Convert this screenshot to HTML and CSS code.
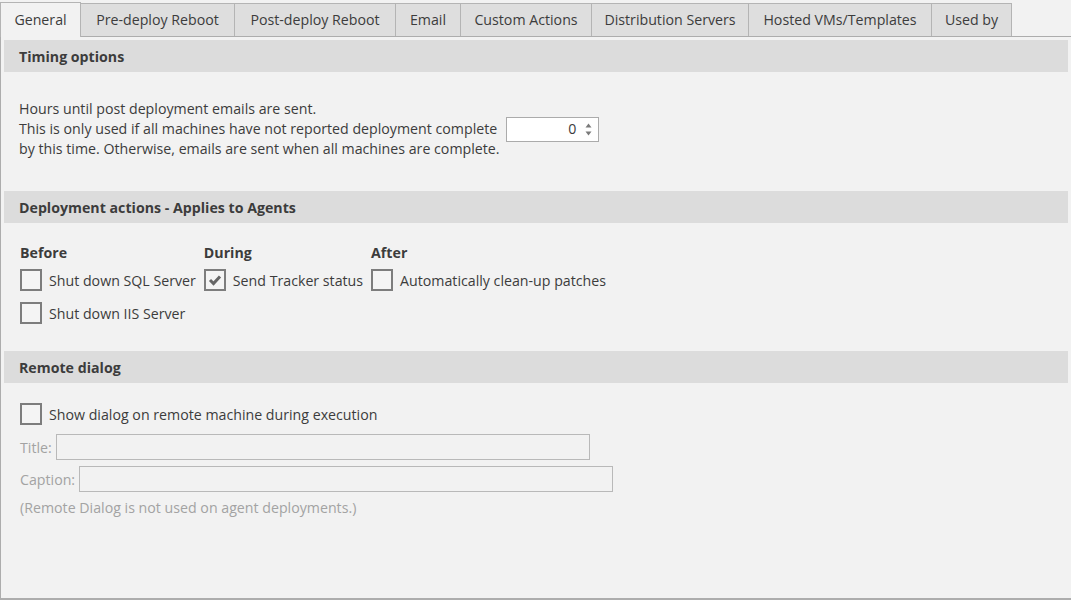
FILE: index.html
```html
<!DOCTYPE html>
<html>
<head>
<meta charset="utf-8">
<link rel="stylesheet" href="styles.css">
</head>
<body>
<div class="tabs">
  <div class="tab active t1">General</div>
  <div class="tab t2">Pre-deploy Reboot</div>
  <div class="tab t3">Post-deploy Reboot</div>
  <div class="tab t4">Email</div>
  <div class="tab t5">Custom Actions</div>
  <div class="tab t6">Distribution Servers</div>
  <div class="tab t7">Hosted VMs/Templates</div>
  <div class="tab t8">Used by</div>
</div>
<div class="panel">
  <div class="section-head">Timing options</div>
  <div class="timing">
    <div class="line">Hours until post deployment emails are sent.</div>
    <div class="line line-spin">This is only used if all machines have not reported deployment complete
      <div class="spinner">
        <span class="spin-val">0</span>
        <span class="spin-arrows">
          <svg width="7" height="5" viewBox="0 0 7 5"><path d="M3.5 0.5 L6.5 4.5 L0.5 4.5 Z" fill="#7a7a7a"/></svg>
          <svg width="7" height="5" viewBox="0 0 7 5"><path d="M0.5 0.5 L6.5 0.5 L3.5 4.5 Z" fill="#7a7a7a"/></svg>
        </span>
      </div>
    </div>
    <div class="line">by this time. Otherwise, emails are sent when all machines are complete.</div>
  </div>

  <div class="section-head head2">Deployment actions - Applies to Agents</div>
  <div class="actions">
    <div class="col">
      <div class="col-title">Before</div>
      <label class="check"><span class="box"></span>Shut down SQL Server</label>
      <label class="check"><span class="box"></span>Shut down IIS Server</label>
    </div>
    <div class="col">
      <div class="col-title">During</div>
      <label class="check"><span class="box checked"><svg width="14" height="12" viewBox="0 0 14 12"><path d="M2 6 L5.5 9.5 L12 2.5" fill="none" stroke="#666666" stroke-width="3"/></svg></span>Send Tracker status</label>
    </div>
    <div class="col">
      <div class="col-title">After</div>
      <label class="check"><span class="box"></span>Automatically clean-up patches</label>
    </div>
  </div>

  <div class="section-head head3">Remote dialog</div>
  <div class="remote">
    <label class="check"><span class="box"></span>Show dialog on remote machine during execution</label>
    <div class="field"><span class="flabel">Title:</span><span class="finput"></span></div>
    <div class="field field2"><span class="flabel">Caption:</span><span class="finput"></span></div>
    <div class="note">(Remote Dialog is not used on agent deployments.)</div>
  </div>
</div>
</body>
</html>
```
FILE: styles.css
```css
html, body {
  margin: 0;
  padding: 0;
  background: #f2f2f2;
}
body {
  font-family: "Open Sans", "Noto Sans", sans-serif;
  font-size: 14.2px;
  color: #3c3c3c;
  width: 1071px;
  height: 600px;
  overflow: hidden;
}
.tabs {
  display: flex;
  align-items: flex-end;
  height: 36px;
  border-bottom: 1px solid #adadad;
}
.tab {
  box-sizing: border-box;
  height: 33px;
  background: #dedede;
  border: 1px solid #b4b4b4;
  border-bottom: none;
  border-left: none;
  display: flex;
  align-items: center;
  justify-content: center;
  padding-bottom: 1px;
  color: #3c3c3c;
  white-space: nowrap;
}
.tab.active {
  background: #f2f2f2;
  border-color: #b4b4b4;
  border-left: 1px solid #b4b4b4;
  height: 35px;
  margin-bottom: -1px;
  padding-bottom: 2px;
}
.t1 { width: 81px; }
.t2 { width: 154px; }
.t3 { width: 161px; }
.t4 { width: 65px; }
.t5 { width: 131px; }
.t6 { width: 157px; }
.t7 { width: 183px; }
.t8 { width: 80px; }

.panel {
  box-sizing: border-box;
  height: 563px;
  border-left: 1px solid #adadad;
  border-bottom: 2px solid #adadad;
  padding: 3px 3px 0 3px;
}
.section-head {
  height: 32px;
  line-height: 34px;
  background: #dcdcdc;
  padding-left: 15px;
  font-weight: bold;
  color: #3c3c3c;
  overflow: hidden;
}
.timing {
  padding: 27px 0 0 15px;
}
.line {
  height: 20px;
  line-height: 20px;
  white-space: nowrap;
}
.line-spin {
  display: flex;
  align-items: center;
}
.spinner {
  box-sizing: border-box;
  width: 93px;
  height: 25px;
  margin-left: 9px;
  background: #ffffff;
  border: 1px solid #ababab;
  display: flex;
  align-items: center;
  justify-content: flex-end;
  padding-right: 6px;
  flex-shrink: 0;
}
.spin-val {
  color: #3c3c3c;
  margin-right: 9px;
}
.spin-arrows {
  display: flex;
  flex-direction: column;
  gap: 3px;
}
.spin-arrows svg { display: block; }
.head2 { margin-top: 32px; }
.actions {
  display: flex;
  gap: 8px;
  padding: 19px 0 0 16px;
}
.col {
  display: flex;
  flex-direction: column;
}
.col-title {
  font-weight: bold;
  height: 20px;
  line-height: 21px;
  margin-bottom: 7px;
}
.check {
  display: flex;
  align-items: center;
  height: 22px;
  margin-bottom: 11px;
  white-space: nowrap;
}
.box {
  box-sizing: border-box;
  width: 22px;
  height: 22px;
  border: 2px solid #7d7d7d;
  background: #f4f4f4;
  margin-right: 7px;
  display: flex;
  align-items: center;
  justify-content: center;
  flex-shrink: 0;
}
.head3 { margin-top: 16px; }
.remote {
  padding: 20px 0 0 16px;
}
.remote .check { margin-bottom: 9px; }
.field {
  display: flex;
  align-items: center;
  height: 26px;
  margin-bottom: 6px;
}
.flabel {
  color: #a3a3a3;
  margin-right: 4px;
}
.finput {
  box-sizing: border-box;
  width: 534px;
  height: 26px;
  border: 1px solid #b9b9b9;
  background: #f2f2f2;
}
.note {
  color: #a3a3a3;
  height: 20px;
  line-height: 20px;
}
```
